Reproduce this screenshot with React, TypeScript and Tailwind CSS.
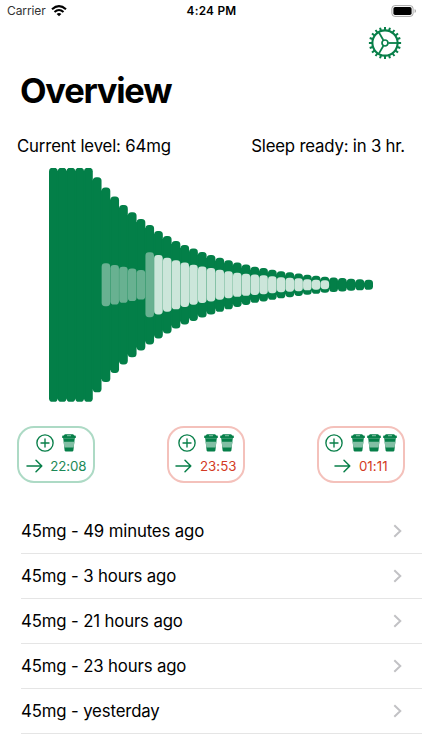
import React from "react";

const CENTER = 116.75;
const PITCH = 8.757;
const outer = [
  117, 117, 117, 117, 117, 107.5, 97.3, 88.2, 79.7, 72.6, 65.7, 59.7, 53.7, 48.7, 43.8, 39.7, 36.2, 32.8,
  29.8, 27, 24.5, 22.2, 20.2, 18, 16.7, 15, 13.5, 12.4, 11.2, 10.1, 9, 8.1, 7.3, 6.8, 6.1, 5.5, 5,
];
const inner = [
  21.5, 19.8, 18.1, 16.3, 14.8, 32.4, 29.7, 26.9, 24.6, 22.2, 20, 18.2, 16.7, 14.9, 13.5, 12.1, 11.1, 10.2,
  9.4, 8.4, 7.5, 7, 6.4, 5.6, 5, 4.5,
];

function LevelChart() {
  return (
    <svg width="324" height="234" viewBox="0 0 324 234" className="block">
      {outer.map((h, i) => (
        <rect key={i} x={i * PITCH} y={CENTER - h} width={PITCH} height={h * 2} rx={Math.min(3.6, h)} fill="#037f48" />
      ))}
      {outer.slice(1).map((h, i) => (
        <rect key={i} x={(i + 1) * PITCH - 1} y={CENTER - h + 3} width="2" height={h * 2 - 6} fill="#037f48" />
      ))}
      {inner.map((h, i) => (
        <rect
          key={i}
          x={(i + 6) * PITCH + 0.1}
          y={CENTER - h}
          width={PITCH - 0.2}
          height={h * 2}
          rx="3.4"
          fill={i < 6 ? "#68b191" : "#cce6da"}
        />
      ))}
    </svg>
  );
}

function Gear() {
  return (
    <svg width="34" height="34" viewBox="-17 -17 34 34" fill="none" stroke="#087f49">
      <circle r="12.6" strokeWidth="2.1" />
      <circle r="3" strokeWidth="1.7" />
      {Array.from({ length: 20 }, (_, i) => (
        <path key={i} d="M13 0H16.1" strokeWidth="2" transform={`rotate(${i * 18})`} />
      ))}
      {[0, 120, 240].map((a) => (
        <path key={a} d="M3.4 0H12" strokeWidth="1.8" transform={`rotate(${a})`} />
      ))}
    </svg>
  );
}

function Cup() {
  return (
    <svg width="14" height="18" viewBox="0 0 14 18">
      <path d="M2.2 1Q2.4.3 3.2.3H10.8Q11.6.3 11.8 1L12.1 1.6H13.2Q13.8 1.6 13.8 2.2V4H.2V2.2Q.2 1.6.8 1.6H1.9Z" fill="#067f49" />
      <path d="M1.2 4H12.8L11.4 16.6Q11.3 17.4 10.5 17.4H3.5Q2.7 17.4 2.6 16.6Z" fill="#067f49" />
      <path d="M1.7 7.7H12.3L11.7 13.4H2.3Z" fill="#82bfa4" />
      <path d="M5 1.7H9" stroke="#a9d3bf" strokeWidth=".8" />
      <path d="M1.6 4.4H12.4" stroke="#62ac89" strokeWidth=".6" />
    </svg>
  );
}

function Option({ cups, time, late, width }: { cups: number; time: string; late?: boolean; width: string }) {
  return (
    <button
      className={`flex h-[57px] flex-col items-center rounded-[17px] border-2 pt-[5px] ${width} ${
        late ? "border-[#f4c1bb]" : "border-[#addac5]"
      }`}
    >
      <span className="flex h-[20px] items-center">
        <svg width="18" height="18" viewBox="0 0 18 18" fill="none" stroke="#087f49" strokeWidth="1.35" strokeLinecap="round" className="mr-[8px]">
          <circle cx="9" cy="9" r="8.1" />
          <path d="M9 5V13M5 9H13" />
        </svg>
        <span className="flex gap-[1.7px]">
          {Array.from({ length: cups }, (_, i) => (
            <Cup key={i} />
          ))}
        </span>
      </span>
      <span className="mt-[4px] flex h-[18px] items-center">
        <svg width="17" height="14" viewBox="0 0 17 14" fill="none" stroke="#087f49" strokeWidth="1.5" strokeLinecap="round" strokeLinejoin="round" className="mr-[7.5px]">
          <path d="M1 7H15.8M10 1.2L15.8 7L10 12.8" />
        </svg>
        <span className={`text-[13.3px] leading-[18px] ${late ? "tracking-[0.05px] text-[#d33a24]" : "tracking-[-0.1px] text-[#1b8857]"}`}>{time}</span>
      </span>
    </button>
  );
}

const entries = ["49 minutes ago", "3 hours ago", "21 hours ago", "23 hours ago", "yesterday"];

export default function App() {
  return (
    <main className="flex h-[750px] w-[422px] flex-col overflow-hidden bg-white font-['Inter','Liberation_Sans',sans-serif] text-black">
      <header className="grid h-[22px] grid-cols-3 items-center pr-[5px] pl-[7px]">
        <div className="flex items-center gap-[5px]">
          <span className="text-[12px] leading-[16px] tracking-[-0.1px] text-[#333]">Carrier</span>
          <svg width="16" height="12" viewBox="0 0 16 12" fill="none" stroke="#000" strokeWidth="2.1">
            <path d="M1 4.3Q8-2 15 4.3" />
            <path d="M3.5 7Q8 3 12.5 7" />
            <path d="M8 11.3L5.6 8.9Q8 7 10.4 8.9Z" fill="#000" stroke="none" />
          </svg>
        </div>
        <span className="pr-[1px] text-center text-[11.8px] leading-[16px] font-semibold tracking-[0.25px]">4:24 PM</span>
        <svg width="26" height="12" viewBox="0 0 26 12" className="justify-self-end">
          <rect x=".9" y=".6" width="21.2" height="10.8" rx="3" fill="none" stroke="#a6a6a6" />
          <rect x="2.4" y="2" width="18.2" height="8" rx="1.7" />
          <path d="M23.6 4Q25 4.6 25 6T23.6 8Z" fill="#a6a6a6" />
        </svg>
      </header>
      <div className="flex h-[43px] justify-end pt-[4px] pr-[20px]">
        <Gear />
      </div>
      <h1 className="h-[68px] pt-[1px] pl-[20px] text-[34.5px] leading-[50px] font-bold tracking-[-1.25px]">Overview</h1>
      <div className="flex h-[35px] justify-between pt-[1px] pr-[17px] pl-[17px] text-[16.8px] leading-[24px]">
        <span className="tracking-[-0.16px]">Current level: 64mg</span>
        <span className="tracking-[-0.2px]">Sleep ready: in 3 hr.</span>
      </div>
      <div className="h-[258px] pl-[49px]">
        <LevelChart />
      </div>
      <div className="flex justify-between pr-[17px] pl-[17px]">
        <Option cups={1} time="22:08" width="w-[78px]" />
        <Option cups={2} time="23:53" late width="w-[78px]" />
        <Option cups={3} time="01:11" late width="w-[88px]" />
      </div>
      <ul className="mt-[26px] pl-[21px]">
        {entries.map((entry) => (
          <li key={entry} className="flex h-[45.1px] items-center justify-between border-b border-[#e5e5e5] pr-[20px] text-[16.8px] leading-[24px] tracking-[-0.15px]">
            <span>45mg - {entry}</span>
            <svg width="9" height="14" viewBox="0 0 9 14" fill="none" stroke="#c2c2c5" strokeWidth="2">
              <path d="M1.3 1.2L7.3 7L1.3 12.8" />
            </svg>
          </li>
        ))}
      </ul>
    </main>
  );
}
